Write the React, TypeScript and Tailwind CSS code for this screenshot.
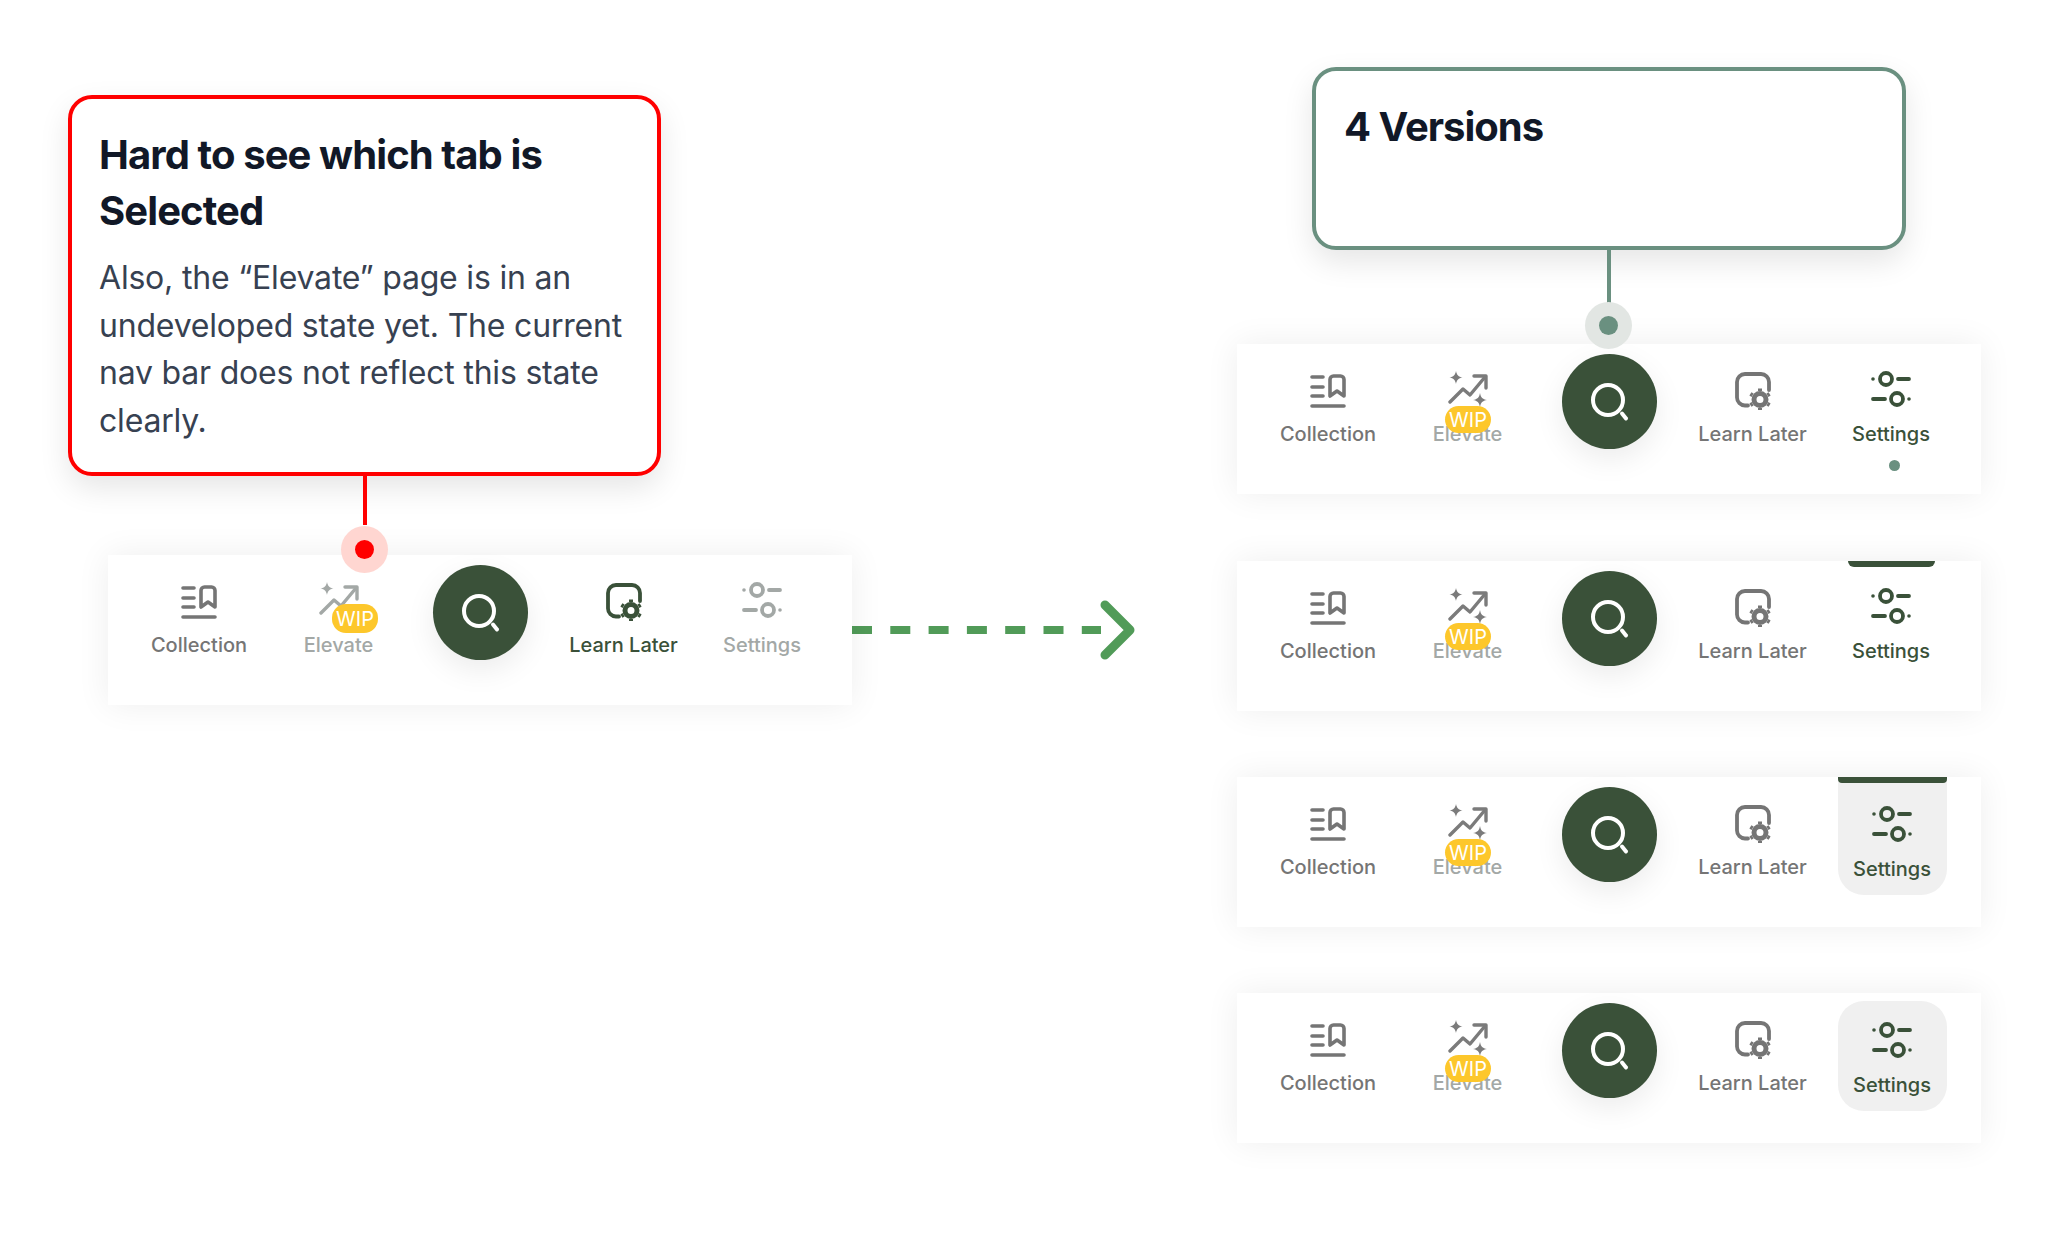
import type { ReactNode } from "react";

const FONT = "font-['Inter','Liberation_Sans',sans-serif]";

function CollectionIcon({ className }: { className: string }) {
  return (
    <svg viewBox="0 0 36 34" className={`h-[34px] w-[36px] ${className}`} fill="none" stroke="currentColor" strokeWidth="3.6" strokeLinecap="round" strokeLinejoin="round">
      <path d="M2 3h11M2 13h11M2 22h11M2 32h32" />
      <path d="M20 22V5.500A3.500 3.500 0 0 1 23.500 2h7A3.500 3.500 0 0 1 34 5.500V22l-7-5z" />
    </svg>
  );
}

function ElevateIcon({ className }: { className: string }) {
  return (
    <svg viewBox="0 0 40 37" className={`h-[37px] w-[40px] ${className}`} fill="none" stroke="currentColor" strokeWidth="3.4" strokeLinecap="round" strokeLinejoin="round">
      <path d="M2 31 15 18l7 6L37 6" />
      <path d="M26 5h12v12" />
      <path d="M8 0c.8 4 2.500 5.800 6.500 6.500C10.500 7.200 8.800 9 8 13c-.8-4-2.500-5.800-6.500-6.500C5.500 5.800 7.200 4 8 0z" fill="currentColor" stroke="none" />
      <path d="M32 22c.8 4.500 2.500 6.200 7 7-4.500.8-6.200 2.500-7 7-.8-4.500-2.500-6.200-7-7 4.500-.8 6.200-2.500 7-7z" fill="currentColor" stroke="none" />
    </svg>
  );
}

function LearnLaterIcon({ className }: { className: string }) {
  return (
    <svg viewBox="0 0 36 38" className={`h-[38px] w-[36px] ${className}`} fill="none" stroke="currentColor" strokeLinejoin="round">
      <path d="M13 33.500H10a8 8 0 0 1-8-8V10a8 8 0 0 1 8-8h16a8 8 0 0 1 8 8v8" strokeWidth="3.800" strokeLinecap="round" />
      <circle cx="25" cy="27.500" r="6" strokeWidth="5" />
      <path d="M25 19v-2.500M25 36v2.500M17.600 23.200l-2.200-1.300M32.400 31.800l2.200 1.300M17.600 31.800l-2.200 1.300M32.400 23.200l2.200-1.300" strokeWidth="4" />
    </svg>
  );
}

function SettingsIcon({ className }: { className: string }) {
  return (
    <svg viewBox="0 0 40 36" className={`h-[36px] w-[40px] ${className}`} fill="none" stroke="currentColor" strokeWidth="3.800" strokeLinecap="round">
      <circle cx="15" cy="8" r="6" />
      <path d="M27 8h11M2 28h12" />
      <circle cx="26" cy="28" r="6" />
      <circle cx="2" cy="8" r="1.800" fill="currentColor" stroke="none" />
      <circle cx="38" cy="28" r="1.800" fill="currentColor" stroke="none" />
    </svg>
  );
}

function SearchButton() {
  return (
    <div className="ml-[25px] mr-[27px] mt-[10px] flex h-[95px] w-[95px] shrink-0 items-center justify-center rounded-full bg-[#3a5139] shadow-[0_10px_30px_rgba(0,0,0,0.08)]">
      <svg viewBox="0 0 44 44" className="h-[44px] w-[44px]" fill="none" stroke="#fff" strokeWidth="4" strokeLinecap="round">
        <circle cx="20" cy="20" r="15" />
        <path d="M34 33.500l4 5" />
      </svg>
    </div>
  );
}

const GREY = "text-[#757575]";
const FADED = "text-[#a3a8a6]";
const ACTIVE = "text-[#3a5139]";

function Item({ color, label, icon, badge, width = "w-[140px]", className = "" }: { color: string; label: string; icon: ReactNode; badge?: ReactNode; width?: string; className?: string }) {
  return (
    <div className={`relative flex shrink-0 flex-col items-center ${width} ${color} ${className}`}>
      <div className="flex h-[75px] items-start justify-center">{icon}</div>
      <span className="text-[20px] leading-[30px] font-medium whitespace-nowrap">{label}</span>
      {badge}
    </div>
  );
}

function Badge({ className }: { className: string }) {
  return (
    <span className={`absolute flex w-[46px] items-center justify-center rounded-[14px] bg-[#fdc72b] text-[20px] leading-none font-normal text-white ${className}`}>
      WIP
    </span>
  );
}

type BarProps = {
  learnColor?: string;
  settingsColor?: string;
  iconElevateColor?: string;
  badgeClass: string;
  children?: ReactNode;
  settingsClass?: string;
};

function NavBar({ learnColor = GREY, settingsColor = ACTIVE, iconElevateColor = "text-[#7b7b7b]", badgeClass, children, settingsClass = "" }: BarProps) {
  return (
    <div className="relative flex h-[150px] w-[744px] shrink-0 bg-white pl-[21px] shadow-[0_0_32px_rgba(0,0,0,0.07)]">
      {children}
      <Item color={GREY} label="Collection" icon={<CollectionIcon className="mt-[30px]" />} />
      <Item
        color={FADED}
        width="w-[139px]"
        label="Elevate"
        icon={<ElevateIcon className={`mt-[27px] ${iconElevateColor}`} />}
        badge={<Badge className={badgeClass} />}
      />
      <SearchButton />
      <Item color={learnColor} width="w-[137px]" label="Learn Later" icon={<LearnLaterIcon className="mt-[28px]" />} />
      <Item color={settingsColor} label="Settings" icon={<SettingsIcon className="mt-[27px]" />} className={settingsClass} />
    </div>
  );
}

function Marker({ halo, dot, className }: { halo: string; dot: string; className: string }) {
  return (
    <span className={`absolute z-10 flex h-[47px] w-[47px] items-center justify-center rounded-full ${halo} ${className}`}>
      <span className={`h-[19px] w-[19px] rounded-full ${dot}`} />
    </span>
  );
}

export default function App() {
  const rightBadge = "left-[47px] top-[62px] h-[27px]";

  return (
    <div className={`flex h-[1258px] w-[2059px] overflow-hidden bg-white ${FONT}`}>
      {/* Current state */}
      <div className="w-[1237px] shrink-0 pl-[68px] pt-[95px]">
        <div className="h-[381px] w-[593px] rounded-[24px] border-4 border-[#ff0000] bg-white px-[27px] pt-[28px] shadow-[0_12px_30px_rgba(0,0,0,0.1)]">
          <h2 className="text-[40px] leading-[56px] font-bold tracking-[-0.9px] text-[#111827]">
            Hard to see which tab is Selected
          </h2>
          <p className="mt-[15px] text-[32px] leading-[47.500px] tracking-[-0.2px] text-[#374151]">
            Also, the “Elevate” page is in an undeveloped state yet. The current nav bar does not reflect this state clearly.
          </p>
        </div>
        <div className="ml-[295px] h-[49px] w-[4px] bg-[#ff0000]" />
        <div className="ml-[40px] mt-[30px] flex items-start">
          <NavBar
            learnColor={ACTIVE}
            settingsColor={FADED}
            iconElevateColor={FADED}
            badgeClass="left-[63px] top-[49px] h-[29px]"
          >
            <Marker halo="bg-[#ffd6d1]" dot="bg-[#ff0000]" className="left-[233px] top-[-29px]" />
          </NavBar>
          <svg viewBox="0 0 284 72" className="mt-[39px] h-[72px] w-[284px] shrink-0" fill="none" stroke="#519b58">
            <path d="M0 36h249" strokeDasharray="20 18.300" strokeWidth="8" />
            <path d="M253 11l25 25-25 25" strokeLinecap="round" strokeLinejoin="round" strokeWidth="9" />
          </svg>
        </div>
      </div>

      {/* Proposed versions */}
      <div className="flex w-[744px] shrink-0 flex-col pt-[67px]">
        <div className="ml-[75px] h-[183px] w-[594px] rounded-[24px] border-4 border-[#6a9080] bg-white px-[28px] pt-[28px] shadow-[0_12px_30px_rgba(0,0,0,0.1)]">
          <h2 className="text-[40px] leading-[55px] font-bold tracking-[-1px] text-[#111827]">4 Versions</h2>
        </div>
        <div className="ml-[370px] h-[53px] w-[4px] bg-[#6a9080]" />

        <div className="mt-[41px]">
          <NavBar badgeClass={rightBadge}>
            <Marker halo="bg-[#e2e6e3]" dot="bg-[#6a9080]" className="left-[348px] top-[-42px]" />
            <span className="absolute left-[652px] top-[116px] h-[11px] w-[11px] rounded-full bg-[#6a9080]" />
          </NavBar>
        </div>

        <div className="mt-[67px]">
          <NavBar badgeClass={rightBadge}>
            <span className="absolute left-[611px] top-0 h-[6px] w-[87px] rounded-b-[6px] bg-[#3a5139]" />
          </NavBar>
        </div>

        <div className="mt-[66px]">
          <NavBar badgeClass={rightBadge} settingsClass="mt-[2px] translate-x-[1px]">
            <span className="absolute left-[601px] top-0 h-[118px] w-[109px] overflow-hidden rounded-b-[26px] bg-[#f0f0f0]">
              <span className="block h-[6px] rounded-b-[4px] bg-[#3a5139]" />
            </span>
          </NavBar>
        </div>

        <div className="mt-[66px]">
          <NavBar badgeClass={rightBadge} settingsClass="mt-[2px] translate-x-[1px]">
            <span className="absolute left-[601px] top-[8px] h-[110px] w-[109px] rounded-[26px] bg-[#f0f0f0]" />
          </NavBar>
        </div>
      </div>
    </div>
  );
}
